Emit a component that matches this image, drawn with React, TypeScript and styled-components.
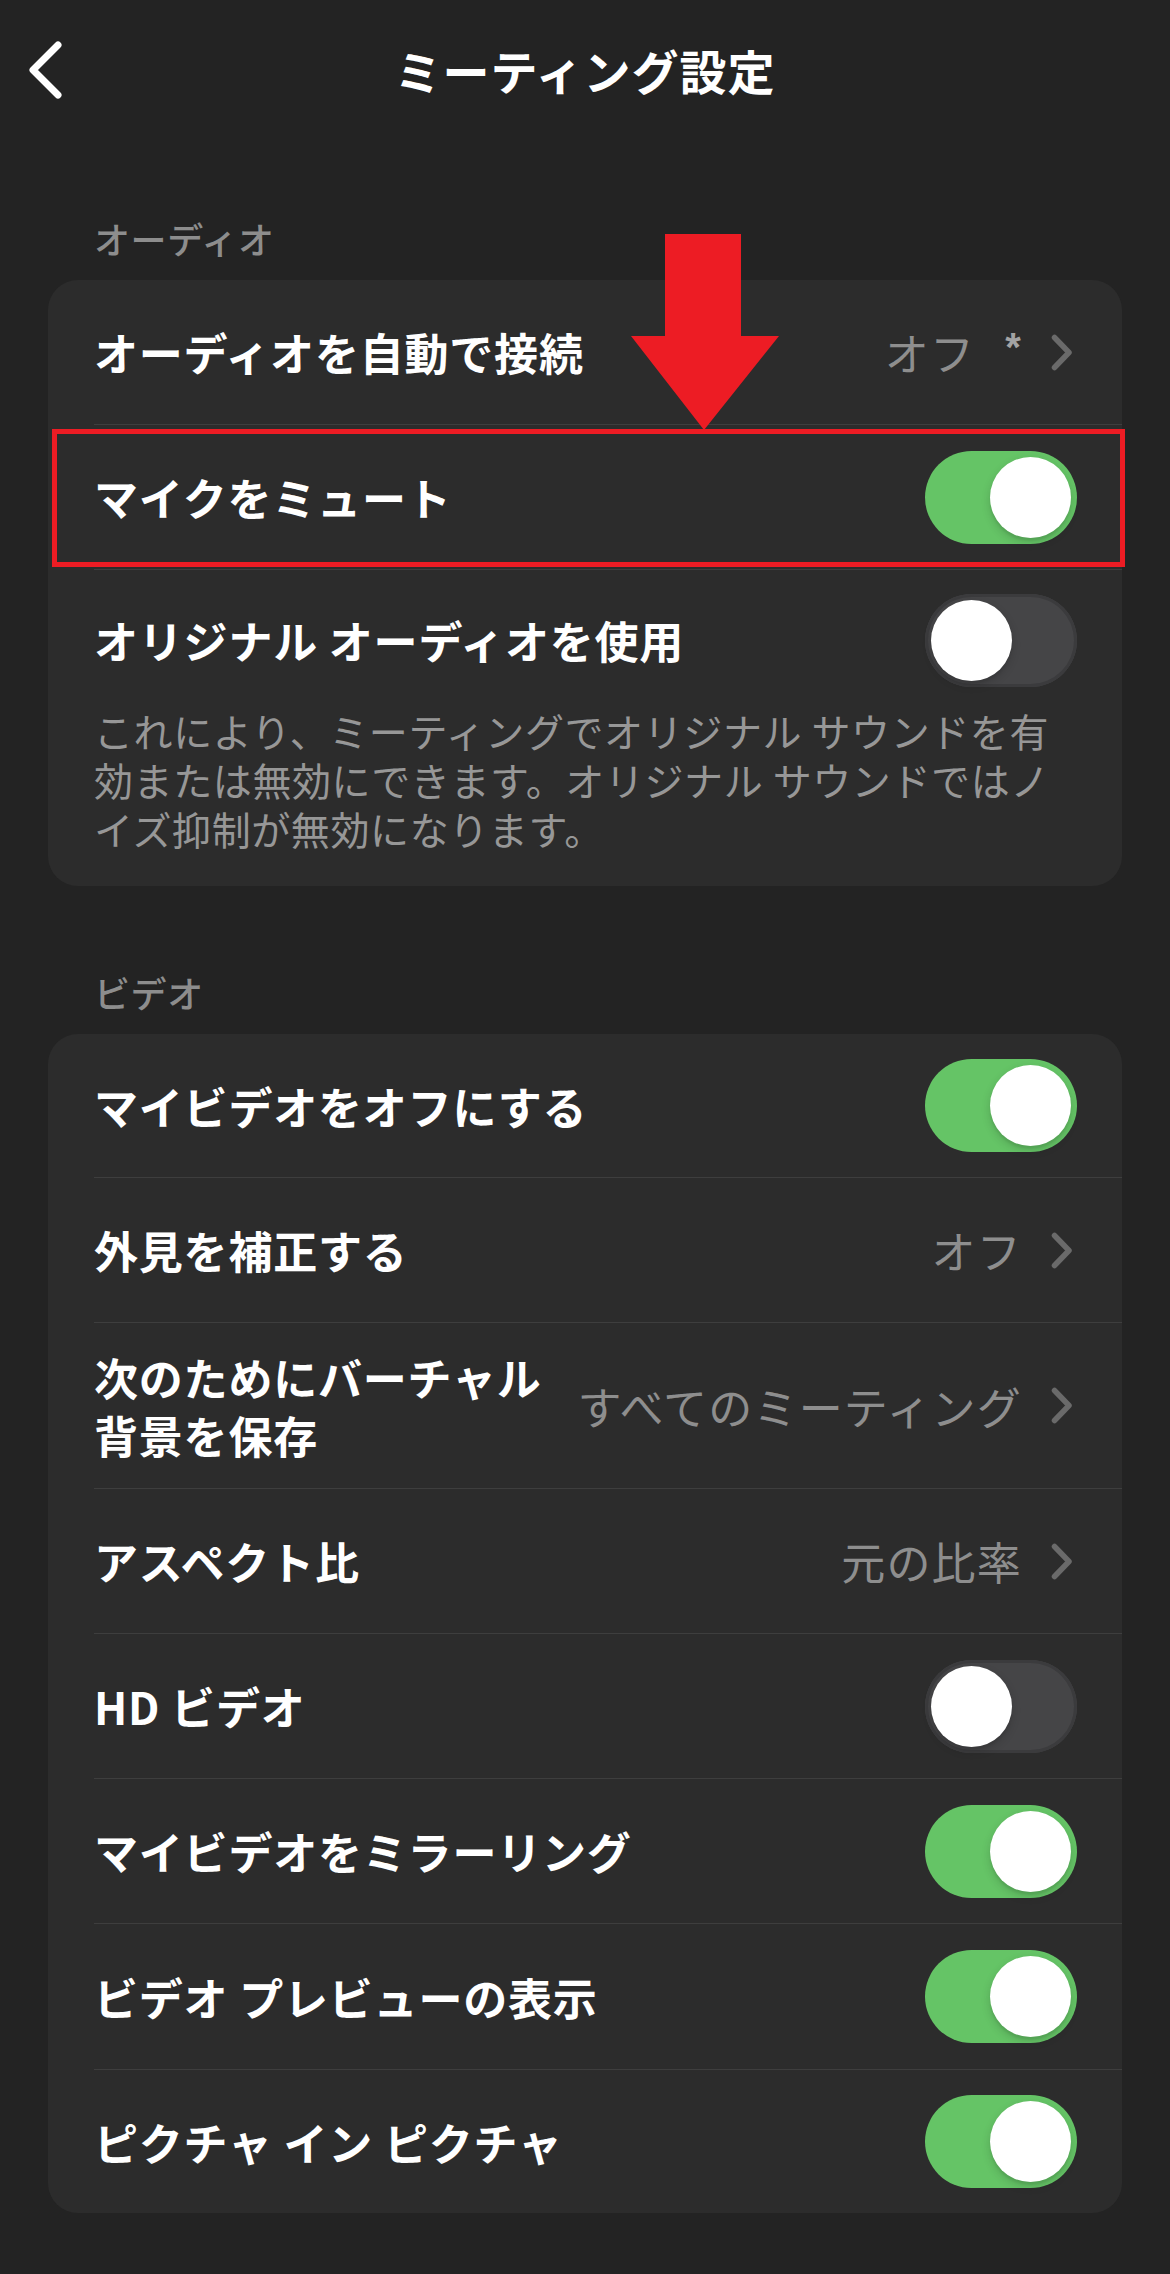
import React from "react";
import styled, { createGlobalStyle } from "styled-components";

const GlobalStyle = createGlobalStyle`
  html, body {
    margin: 0;
    padding: 0;
    background: #232323;
  }
  * { box-sizing: border-box; }
`;

const FONT = `"Noto Sans CJK JP", "Noto Sans", sans-serif`;

const Page = styled.div`
  width: 1170px;
  min-height: 2274px;
  background: #232323;
  font-family: ${FONT};
  color: #ffffff;
  padding-bottom: 60px;
`;

const NavBar = styled.header`
  height: 140px;
  display: grid;
  grid-template-columns: 1fr auto 1fr;
  align-items: center;
`;

const BackButton = styled.button`
  justify-self: start;
  background: none;
  border: none;
  padding: 0 0 0 26px;
  margin: 0;
  display: flex;
  align-items: center;
  cursor: pointer;
  height: 60px;
`;

const Title = styled.h1`
  margin: 0;
  font-size: 47px;
  font-weight: 700;
  line-height: 60px;
  color: #ffffff;
  letter-spacing: 1px;
`;

const Section = styled.section<{ $top: number }>`
  margin: ${(p) => p.$top}px 48px 0;
`;

const SectionHeader = styled.h2`
  margin: 0 0 18px;
  padding-left: 46px;
  font-size: 36px;
  line-height: 48px;
  font-weight: 500;
  letter-spacing: 0.6px;
  color: #8d8d8d;
`;

const Card = styled.div`
  position: relative;
  background: #2c2c2c;
  border-radius: 30px;
`;

const Row = styled.div<{ $height?: number; $padTop?: number }>`
  position: relative;
  height: ${(p) => p.$height ?? 144}px;
  padding: ${(p) => p.$padTop ?? 0}px 45px 0 46px;
  display: flex;
  align-items: center;
  justify-content: space-between;
  gap: 30px;
`;

const Divider = styled.div`
  height: 1px;
  margin-left: 46px;
  background: #3e3e3e;
`;

const Label = styled.div`
  font-size: 44px;
  font-weight: 700;
  line-height: 58px;
  letter-spacing: 0.8px;
  color: #ffffff;
  white-space: nowrap;
`;

const ValueGroup = styled.div`
  display: flex;
  align-items: center;
  gap: 29px;
  padding-right: 4px;
  flex-shrink: 0;
`;

const Value = styled.span`
  font-size: 44px;
  font-weight: 400;
  line-height: 58px;
  letter-spacing: 1.2px;
  color: #8e8e8e;
  white-space: nowrap;
  display: flex;
  align-items: flex-start;
`;

const Star = styled.span`
  margin-left: 30px;
  font-size: 40px;
  line-height: 40px;
  color: #a3a3a3;
  font-family: "Liberation Sans", sans-serif;
  font-weight: 700;
  padding-top: 4px;
`;

const Description = styled.p`
  margin: 0;
  padding: 0 46px 33px;
  font-size: 39px;
  line-height: 49px;
  font-weight: 400;
  letter-spacing: 0.6px;
  color: #979797;
`;

const Track = styled.div<{ $on: boolean }>`
  position: relative;
  flex-shrink: 0;
  width: 152px;
  height: 93px;
  border-radius: 47px;
  background: ${(p) => (p.$on ? "#65c466" : "#454547")};
  box-shadow: ${(p) => (p.$on ? "none" : "inset 0 0 0 3px #3b3b3d")};
  display: flex;
  align-items: center;
  justify-content: ${(p) => (p.$on ? "flex-end" : "flex-start")};
  padding: 0 6px;
`;

const Knob = styled.div`
  width: 81px;
  height: 81px;
  border-radius: 50%;
  background: #ffffff;
  box-shadow: 0 4px 10px rgba(0, 0, 0, 0.16), 0 3px 2px rgba(0, 0, 0, 0.06);
`;

const Highlight = styled.div`
  position: absolute;
  top: 4px;
  bottom: 2px;
  left: 4px;
  right: -3px;
  border: 5px solid #ed1c24;
  pointer-events: none;
`;

const ArrowWrap = styled.div`
  position: absolute;
  top: -46px;
  left: 583px;
  width: 148px;
  height: 196px;
  z-index: 2;
  pointer-events: none;
`;

const Toggle = ({ on }: { on: boolean }) => (
  <Track $on={on}>
    <Knob />
  </Track>
);

const Chevron = () => (
  <svg width="22" height="37" viewBox="0 0 22 37" fill="none">
    <path
      d="M3.5 3.5 L18 18.5 L3.5 33.5"
      stroke="#6a6a6a"
      strokeWidth="5.5"
      strokeLinecap="round"
      strokeLinejoin="round"
    />
  </svg>
);

const BackIcon = () => (
  <svg width="38" height="60" viewBox="0 0 38 60">
    <path
      d="M32 5 L7 30 L32 55"
      fill="none"
      stroke="#ffffff"
      strokeWidth="7"
      strokeLinecap="round"
      strokeLinejoin="round"
    />
  </svg>
);

const RedArrow = () => (
  <ArrowWrap>
    <svg width="148" height="196" viewBox="0 0 148 196">
      <polygon
        points="34,0 110,0 110,102 148,102 73,196 0,102 34,102"
        fill="#ed1c24"
      />
    </svg>
  </ArrowWrap>
);

type Item =
  | { kind: "toggle"; label: React.ReactNode; on: boolean; height?: number }
  | { kind: "link"; label: React.ReactNode; value: string; star?: boolean; height?: number };

const videoItems: Item[] = [
  { kind: "toggle", label: "マイビデオをオフにする", on: true, height: 143 },
  { kind: "link", label: "外見を補正する", value: "オフ" },
  {
    kind: "link",
    label: (
      <>
        次のためにバーチャル
        <br />
        背景を保存
      </>
    ),
    value: "すべてのミーティング",
    height: 165,
  },
  { kind: "link", label: "アスペクト比", value: "元の比率" },
  { kind: "toggle", label: "HD ビデオ", on: false },
  { kind: "toggle", label: "マイビデオをミラーリング", on: true },
  { kind: "toggle", label: "ビデオ プレビューの表示", on: true, height: 145 },
  { kind: "toggle", label: "ピクチャ イン ピクチャ", on: true, height: 143 },
];

const RowContent = ({ item }: { item: Item }) => (
  <>
    <Label>{item.label}</Label>
    {item.kind === "toggle" ? (
      <Toggle on={item.on} />
    ) : (
      <ValueGroup>
        <Value>
          {item.value}
          {item.star && <Star>*</Star>}
        </Value>
        <Chevron />
      </ValueGroup>
    )}
  </>
);

export default function App() {
  return (
    <>
      <GlobalStyle />
      <Page>
        <NavBar>
          <BackButton aria-label="戻る">
            <BackIcon />
          </BackButton>
          <Title>ミーティング設定</Title>
          <div />
        </NavBar>

        <Section $top={74}>
          <SectionHeader>オーディオ</SectionHeader>
          <Card>
            <RedArrow />
            <Row>
              <RowContent
                item={{ kind: "link", label: "オーディオを自動で接続", value: "オフ", star: true }}
              />
            </Row>
            <Divider />
            <Row>
              <RowContent item={{ kind: "toggle", label: "マイクをミュート", on: true }} />
              <Highlight />
            </Row>
            <Divider />
            <Row $height={136} $padTop={4}>
              <RowContent item={{ kind: "toggle", label: "オリジナル オーディオを使用", on: false }} />
            </Row>
            <Description>
              これにより、ミーティングでオリジナル サウンドを有
              <br />
              効または無効にできます。オリジナル サウンドではノ
              <br />
              イズ抑制が無効になります。
            </Description>
          </Card>
        </Section>

        <Section $top={82}>
          <SectionHeader>ビデオ</SectionHeader>
          <Card>
            {videoItems.map((item, i) => (
              <React.Fragment key={i}>
                {i > 0 && <Divider />}
                <Row $height={item.height}>
                  <RowContent item={item} />
                </Row>
              </React.Fragment>
            ))}
          </Card>
        </Section>
      </Page>
    </>
  );
}
